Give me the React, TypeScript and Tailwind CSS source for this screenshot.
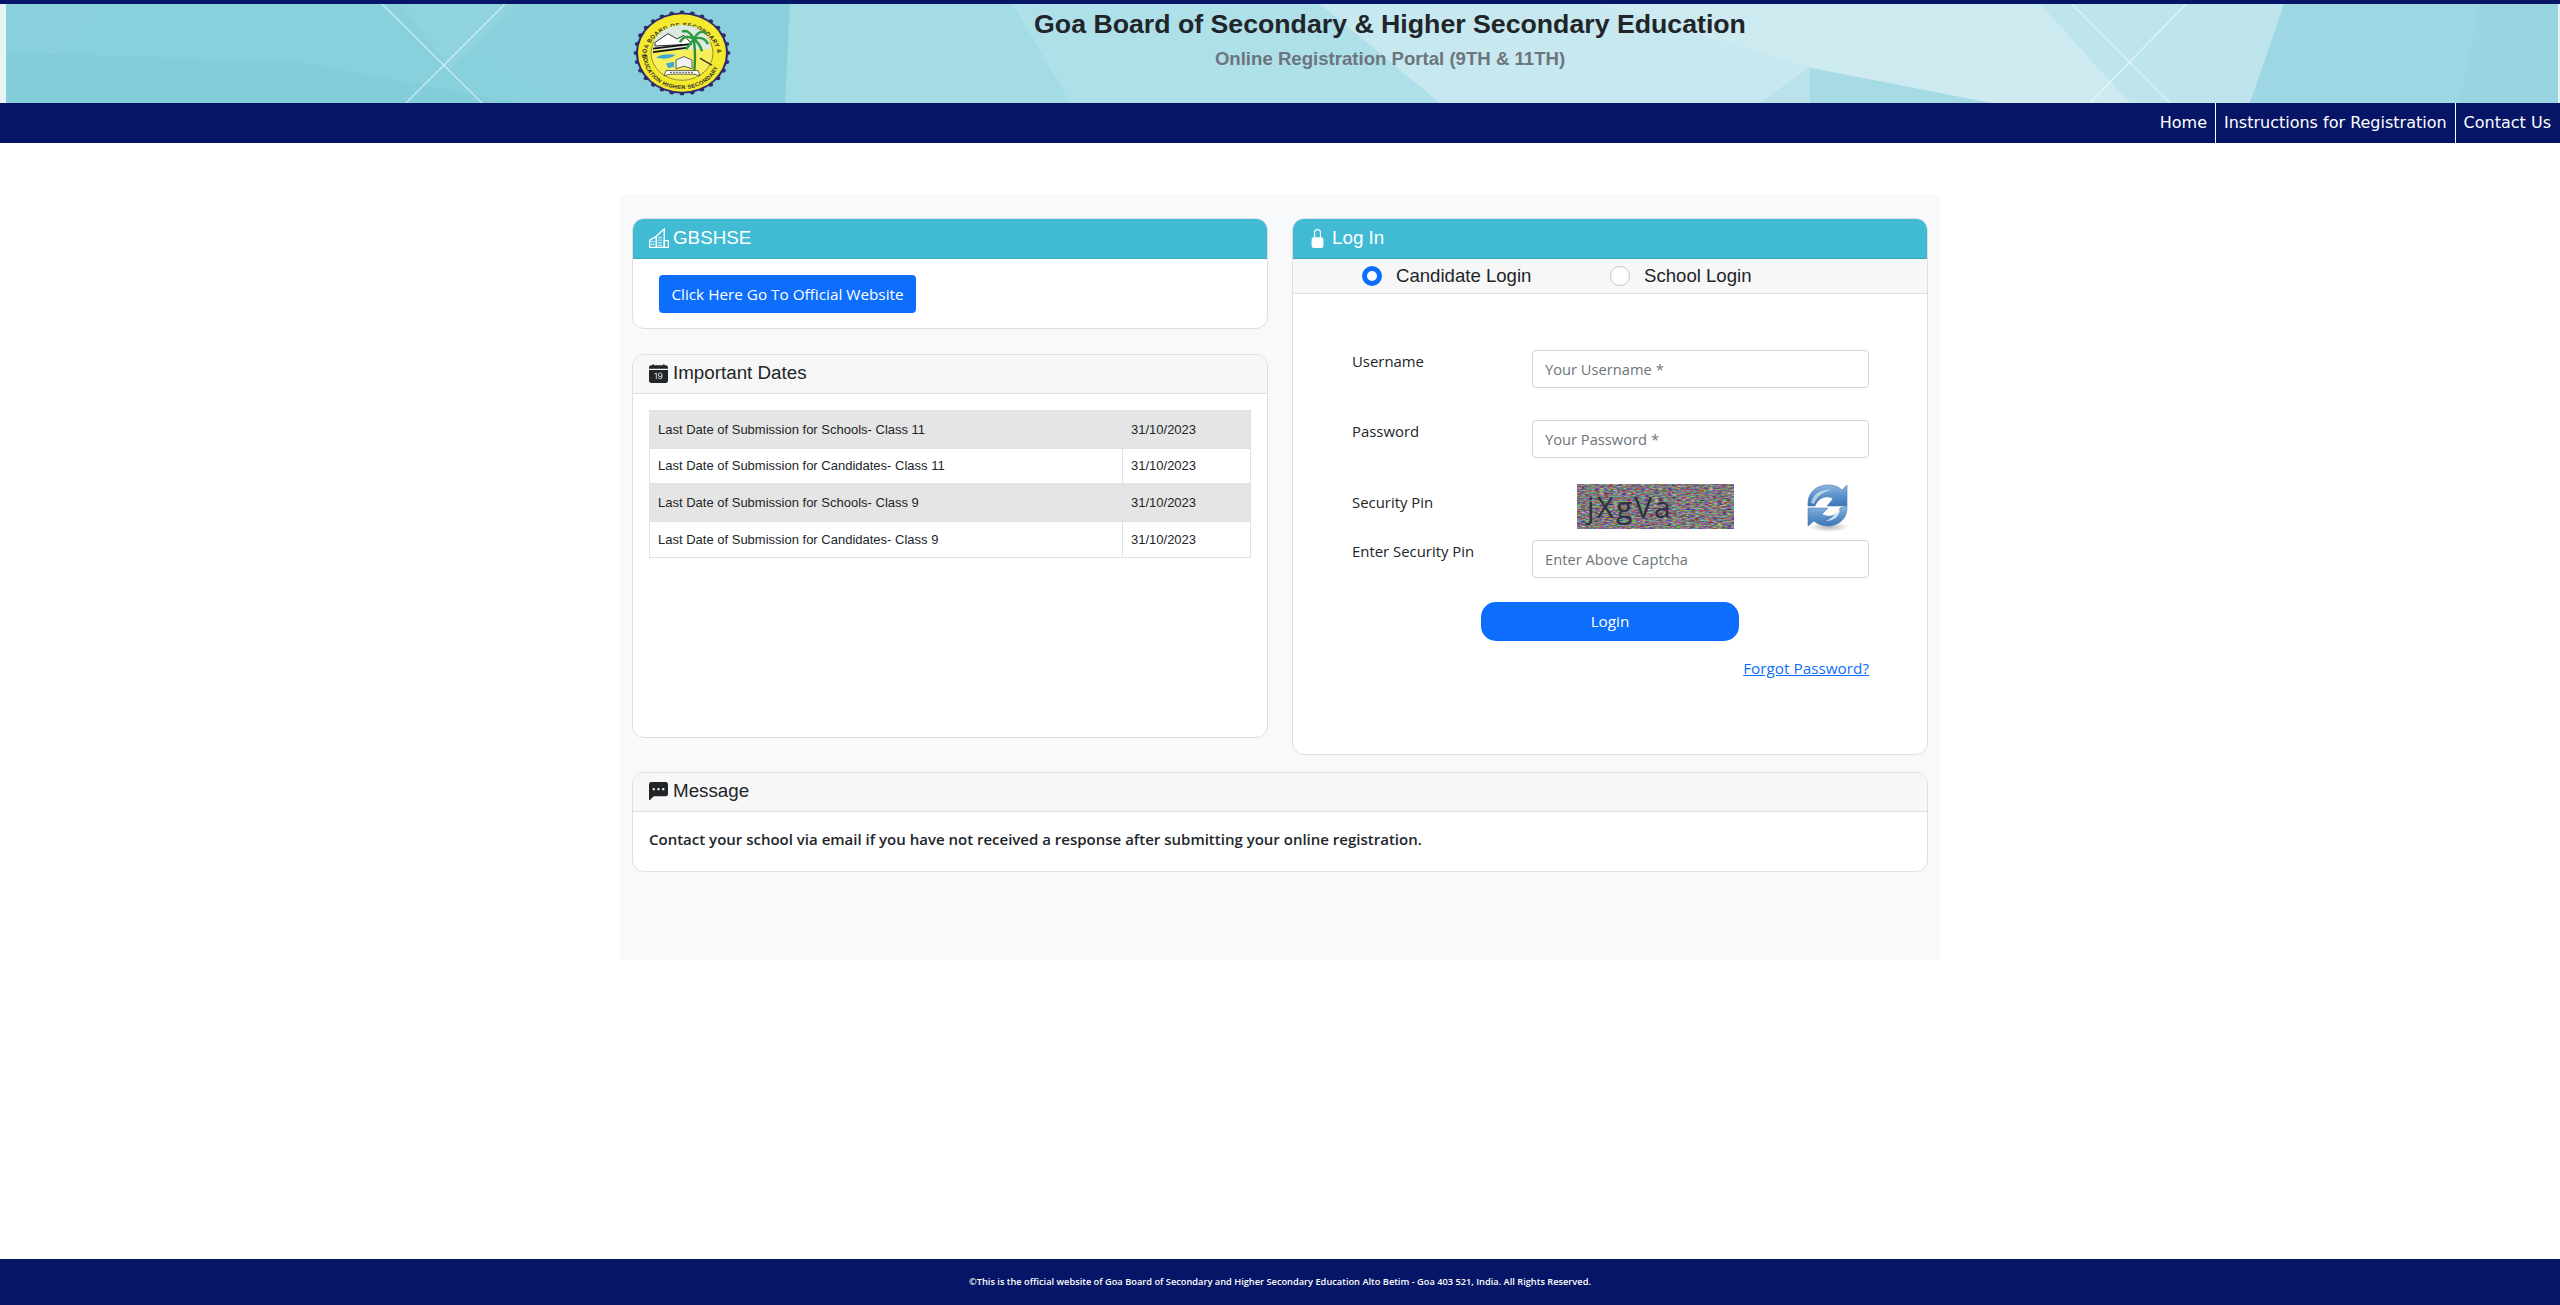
import React from 'react';
import { BsCalendarDateFill, BsChatLeftDotsFill, BsLockFill } from 'react-icons/bs';

const DATES = [
  { label: 'Last Date of Submission for Schools- Class 11', date: '31/10/2023', shade: true, h: 'h-[38px]' },
  { label: 'Last Date of Submission for Candidates- Class 11', date: '31/10/2023', shade: false, h: 'h-[35px]' },
  { label: 'Last Date of Submission for Schools- Class 9', date: '31/10/2023', shade: true, h: 'h-[38px]' },
  { label: 'Last Date of Submission for Candidates- Class 9', date: '31/10/2023', shade: false, h: 'h-[36px]' },
];

const BannerArt = () => (
  <svg className="absolute inset-0 w-full h-full" viewBox="0 0 2560 99" preserveAspectRatio="none">
    <rect width="2560" height="99" fill="#88d0dc" />
    <rect width="6" height="99" fill="#e6f4f6" />
    <polygon points="6,0 100,0 60,50 30,99 6,99" fill="#8ad1dd" />
    <polygon points="6,48 300,58 520,99 6,99" fill="#82cdd9" />
    <polygon points="380,0 790,0 790,99 560,99 500,60" fill="#89d0dc" />
    <polygon points="400,0 520,0 450,65" fill="#8ed3de" />
    <polygon points="790,0 1012,0 1070,99 785,99" fill="#a4dce6" />
    <polygon points="1012,0 1400,0 1640,99 1070,99" fill="#aee0e9" />
    <polygon points="1320,0 1700,0 1810,64 1760,99 1440,99" fill="#c6e8ee" />
    <polygon points="1600,0 2080,0 2200,99 1990,99 1810,64" fill="#cdeaf0" />
    <polygon points="1810,64 1990,99 1810,99" fill="#a6dbe5" />
    <polygon points="1810,64 1760,99 1810,99" fill="#b9e2ea" />
    <polygon points="2040,0 2290,0 2250,99 2130,99" fill="#bfe5ec" />
    <polygon points="2284,0 2560,0 2560,99 2250,99" fill="#9cd7e3" />
    <polygon points="2480,0 2560,0 2560,99 2460,99" fill="#98d5e1" />
    <rect x="2558" width="2" height="99" fill="#e6f4f6" />
    <g stroke="#ffffff" strokeOpacity="0.5" strokeWidth="1.5" fill="none">
      <line x1="382" y1="0" x2="482" y2="99" />
      <line x1="505" y1="0" x2="406" y2="99" />
      <line x1="2072" y1="0" x2="2170" y2="99" />
      <line x1="2186" y1="0" x2="2090" y2="99" />
    </g>
  </svg>
);

const Seal = () => {
  const spikes = Array.from({ length: 28 }, (_, i) => {
    const a = (i / 28) * Math.PI * 2;
    return (
      <circle key={i} cx={50 + Math.cos(a) * 46} cy={50 + Math.sin(a) * 46} r="2.4" fill="#2e2a6e" />
    );
  });
  return (
    <svg className="w-[100px] h-[88px] shrink-0" viewBox="0 0 100 100" preserveAspectRatio="none">
      {spikes}
      <circle cx="50" cy="50" r="46" fill="#2e2a6e" />
      <circle cx="50" cy="50" r="44" fill="#f4e92d" />
      <defs>
        <path id="sealTop" d="M14 56 A36 36 0 1 1 86 56" />
        <path id="sealBottom" d="M11 52 A39 39 0 0 0 89 52" />
      </defs>
      <text fontSize="6.2" fontWeight="700" fill="#2b2b2b" fontFamily="Liberation Sans, sans-serif" letterSpacing="0.5">
        <textPath href="#sealTop">GOA BOARD OF SECONDARY &amp;</textPath>
      </text>
      <text fontSize="6" fontWeight="700" fill="#2b2b2b" fontFamily="Liberation Sans, sans-serif" letterSpacing="0.3">
        <textPath href="#sealBottom">EDUCATION HIGHER SECONDARY</textPath>
      </text>
      <circle cx="50" cy="50" r="31" fill="#f6ee5a" stroke="#4a4a2a" strokeWidth="0.6" />
      <path d="M22 36 A31 31 0 0 1 78 36 L78 46 L22 46 Z" fill="#dcebe0" />
      <path d="M23 38 L36 28 L45 34 L52 30 L60 40 L23 42 Z" fill="#ffffff" stroke="#222222" strokeWidth="1" />
      <path d="M21 45 L58 40 M21 49 L56 44" stroke="#111111" strokeWidth="2" />
      <path d="M24 55 Q32 50 44 52 Q36 58 28 56 Z M34 62 L42 60 L42 66 L36 67 Z" fill="#3fa9d6" />
      <path d="M62 74 Q64 54 62 36" stroke="#2f8f3c" strokeWidth="2.4" fill="none" />
      <path d="M62 34 Q52 28 48 38 M62 34 Q56 22 50 26 M62 34 Q68 22 74 28 M62 34 Q72 30 76 40 M62 34 Q58 40 54 46 M62 34 Q68 40 70 48" stroke="#2e9b3e" strokeWidth="2.6" fill="none" />
      <path d="M44 58 L52 54 L60 58 L60 68 L52 65 L44 68 Z" fill="#f2f2f2" stroke="#333333" strokeWidth="0.8" />
      <path d="M68 56 L80 64" stroke="#222222" strokeWidth="1.4" />
      <path d="M34 70 L66 70 L68 76 L62 74 L38 74 L32 76 Z" fill="#ffffff" stroke="#333333" strokeWidth="0.8" />
      <path d="M38 72 L62 72" stroke="#555555" strokeWidth="1" strokeDasharray="2 1" />
    </svg>
  );
};

const BuildingIcon = () => (
  <svg className="w-[20px] h-[20px]" viewBox="0 0 19 19" fill="none" stroke="#ffffff" strokeWidth="1.3">
    <path d="M.7 18.4V11.5L7 8V18.4Z" />
    <path d="M7 7.5L14.5 1V18.4H7Z" />
    <path d="M14.5 12H18.4V18.4H14.5Z" />
    <path d="M9 9h3.5M9 11.5h3.5M9 14h3.5M9 16.5h3.5M2 13h3M2 15.5h3" strokeDasharray="1.2 .6" />
  </svg>
);

const RefreshIcon = () => (
  <svg className="w-[44px] h-[48px]" viewBox="0 0 44 48">
    <defs>
      <linearGradient id="refreshFill" x1="0" y1="0" x2="0" y2="1">
        <stop offset="0" stopColor="#8db4dc" />
        <stop offset="0.5" stopColor="#5d93cb" />
        <stop offset="1" stopColor="#3d75b6" />
      </linearGradient>
      <radialGradient id="refreshShade">
        <stop offset="0" stopColor="#777777" stopOpacity="0.55" />
        <stop offset="1" stopColor="#777777" stopOpacity="0" />
      </radialGradient>
    </defs>
    <ellipse cx="22" cy="43" rx="20" ry="5" fill="url(#refreshShade)" />
    <path d="M1 22 C0 8 10 1 21 1 C28 1 32 3 35 6 L40 1 L40 22 L20 22 L26 15 C22 11 12 12 8 22 Z" fill="url(#refreshFill)" stroke="#4a7fb8" strokeWidth="0.6" />
    <path d="M40 22 C41 34 32 42 21 42 C14 42 9 39 7 37 L1 42 L1 24 L21 24 L15 30 C20 34 30 33 33 24 Z" fill="url(#refreshFill)" stroke="#4a7fb8" strokeWidth="0.6" />
    <path d="M4 19 C6 10 14 5 24 6 C16 8 10 12 7 20 Z" fill="#ffffff" fillOpacity="0.55" />
    <path d="M33 26 C32 33 26 37 19 37 C26 34 29 30 30 25 Z" fill="#ffffff" fillOpacity="0.75" />
  </svg>
);

const Captcha = () => (
  <div className="relative w-[157px] h-[45px] overflow-hidden">
    <svg className="absolute inset-0 w-full h-full" viewBox="0 0 157 45" preserveAspectRatio="none">
      <filter id="captchaNoise" x="0" y="0" width="100%" height="100%" colorInterpolationFilters="sRGB">
        <feTurbulence type="fractalNoise" baseFrequency="0.22 0.75" numOctaves="2" seed="7" />
        <feColorMatrix type="matrix" values="1.1 0 0 0 -0.05  0 1.1 0 0 -0.08  0 0 1.1 0 -0.06  0 0 0 0 1" />
      </filter>
      <rect width="157" height="45" filter="url(#captchaNoise)" />
    </svg>
    <span className="absolute left-[10px] top-[3px] text-[30px] leading-[40px] tracking-[2px] text-[#2a3340] font-['Open_Sans',sans-serif] select-none">
      jXgVa
    </span>
  </div>
);

const FieldRow = ({ label, placeholder, type = 'text' }: { label: string; placeholder: string; type?: string }) => (
  <div className="flex">
    <label className="w-[180px] pt-[1px] text-[14.9px] leading-[20px] text-[#212529]">{label}</label>
    <input
      type={type}
      placeholder={placeholder}
      className="w-[337px] h-[38px] px-[12px] bg-white border border-[#ced4da] rounded-[4px] text-[14.7px] placeholder:text-[#6c757d] outline-none"
    />
  </div>
);

const Radio = ({ label, checked, className }: { label: string; checked?: boolean; className: string }) => (
  <label className={`flex items-center gap-[14px] text-[18.6px] text-[#212529] font-['Liberation_Sans',sans-serif] ${className}`}>
    <input
      type="radio"
      name="loginType"
      defaultChecked={checked}
      className="appearance-none w-[20px] h-[20px] rounded-full bg-white border border-[#c4c8cc] checked:border-[5px] checked:border-[#0d6efd]"
    />
    {label}
  </label>
);

export default function App() {
  return (
    <div className="min-h-[1305px] flex flex-col bg-white text-[#212529] font-['Open_Sans',sans-serif]">
      <header className="border-t-[4px] border-[#061566]">
        <div className="relative h-[99px] overflow-hidden">
          <BannerArt />
          <div className="relative w-[1320px] mx-auto flex h-full">
            <div className="pl-[12px] pt-[5px]">
              <Seal />
            </div>
            <div className="absolute left-[220px] right-0 top-0 text-center font-['Liberation_Sans',sans-serif] font-bold">
              <h1 className="mt-[2px] text-[26.7px] leading-[36px] text-[#212529]">Goa Board of Secondary &amp; Higher Secondary Education</h1>
              <h2 className="mt-[4px] text-[18.6px] leading-[26px] text-[#6c757d]">Online Registration Portal (9TH &amp; 11TH)</h2>
            </div>
          </div>
        </div>
        <nav className="h-[40px] bg-[#061566] flex justify-end text-white font-['DejaVu_Sans',sans-serif] text-[16px]">
          <a className="flex items-center px-[8px] border-r border-white">Home</a>
          <a className="flex items-center px-[8px] border-r border-white">Instructions for Registration</a>
          <a className="flex items-center pl-[8px] pr-[9px]">Contact Us</a>
        </nav>
      </header>

      <main className="flex-1 pt-[51px]">
        <div className="w-[1320px] h-[766px] mx-auto px-[12px] pt-[24px] bg-[#f8f9fa]">
          <div className="flex gap-[24px]">
            <div className="w-[636px] flex flex-col gap-[25px]">
              <section className="h-[111px] bg-white border border-[#dfdfdf] rounded-[12px] overflow-hidden">
                <div className="h-[40px] px-[16px] pb-[1px] flex items-center gap-[4px] bg-[#41bad4] border-b border-[#3aa7bf] text-white text-[18.8px] font-['Liberation_Sans',sans-serif]">
                  <BuildingIcon />
                  GBSHSE
                </div>
                <div className="pl-[26px] pt-[16px]">
                  <button className="h-[38px] w-[257px] bg-[#0d6efd] rounded-[4px] text-white text-[15.3px]">Click Here Go To Official Website</button>
                </div>
              </section>

              <section className="h-[384px] bg-white border border-[#dfdfdf] rounded-[12px] overflow-hidden">
                <div className="h-[39px] px-[16px] pb-[1px] flex items-center gap-[5px] bg-[#f7f7f7] border-b border-[#dfdfdf] text-[18.8px] font-['Liberation_Sans',sans-serif]">
                  <BsCalendarDateFill size={19} />
                  Important Dates
                </div>
                <div className="px-[16px] pt-[16px]">
                  <table className="w-full border-collapse text-[13px] font-['Liberation_Sans',sans-serif] text-[#212529]">
                    <tbody>
                      {DATES.map(row => (
                        <tr key={row.label} className={`${row.h} ${row.shade ? 'bg-[#e5e5e5]' : 'bg-white'}`}>
                          <td className="px-[8px] border border-[#dee2e6]">{row.label}</td>
                          <td className="w-[128px] px-[8px] border border-[#dee2e6]">{row.date}</td>
                        </tr>
                      ))}
                    </tbody>
                  </table>
                </div>
              </section>
            </div>

            <section className="w-[636px] h-[537px] bg-white border border-[#dfdfdf] rounded-[12px] overflow-hidden">
              <div className="h-[40px] px-[15px] pb-[1px] flex items-center gap-[5px] bg-[#41bad4] border-b border-[#3aa7bf] text-white text-[18.8px] font-['Liberation_Sans',sans-serif]">
                <BsLockFill size={19} />
                Log In
              </div>
              <div className="h-[35px] flex items-center bg-[#f7f7f7] border-b border-[#dfdfdf]">
                <Radio label="Candidate Login" checked className="ml-[69px] w-[248px]" />
                <Radio label="School Login" className="" />
              </div>
              <div className="pl-[59px] pt-[56px]">
                <FieldRow label="Username" placeholder="Your Username *" />
                <div className="mt-[32px]">
                  <FieldRow label="Password" placeholder="Your Password *" />
                </div>
                <div className="mt-[26px] flex h-[45px]">
                  <label className="w-[225px] pt-[8px] text-[14.9px] leading-[20px]">Security Pin</label>
                  <Captcha />
                  <div className="ml-[73px]">
                    <RefreshIcon />
                  </div>
                </div>
                <div className="mt-[11px]">
                  <FieldRow label="Enter Security Pin" placeholder="Enter Above Captcha" />
                </div>
                <div className="mt-[24px] pl-[129px]">
                  <button className="w-[258px] h-[39px] bg-[#0d6efd] rounded-[15px] text-white text-[15.3px]">Login</button>
                </div>
                <div className="mt-[15px] w-[517px] text-right">
                  <a className="text-[15.3px] leading-[20px] text-[#0d6efd] underline">Forgot Password?</a>
                </div>
              </div>
            </section>
          </div>

          <section className="mt-[17px] w-[1296px] h-[100px] bg-white border border-[#dfdfdf] rounded-[12px] overflow-hidden">
            <div className="h-[39px] px-[16px] pb-[1px] flex items-center gap-[5px] bg-[#f7f7f7] border-b border-[#dfdfdf] text-[18.8px] font-['Liberation_Sans',sans-serif]">
              <BsChatLeftDotsFill size={19} />
              Message
            </div>
            <p className="px-[16px] pt-[17px] text-[15px] leading-[20px] font-semibold">
              Contact your school via email if you have not received a response after submitting your online registration.
            </p>
          </section>
        </div>
      </main>

      <footer className="h-[46px] bg-[#061566] flex items-center justify-center text-white text-[9.25px] font-semibold">
        ©This is the official website of Goa Board of Secondary and Higher Secondary Education Alto Betim - Goa 403 521, India. All Rights Reserved.
      </footer>
    </div>
  );
}
